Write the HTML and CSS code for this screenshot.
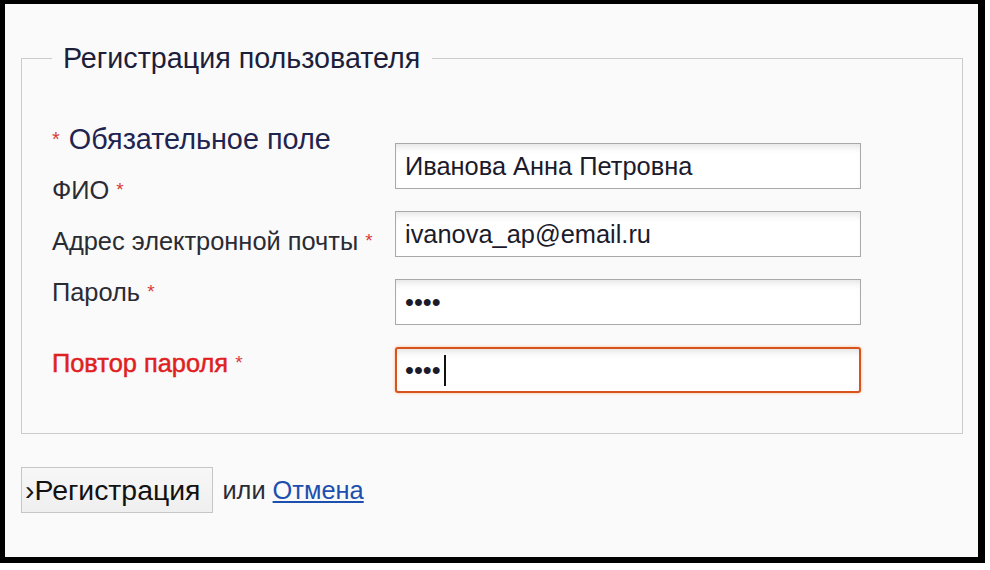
FILE: index.html
```html
<!DOCTYPE html>
<html lang="ru">
<head>
<meta charset="utf-8">
<title>Регистрация пользователя</title>
<link rel="stylesheet" href="styles.css">
</head>
<body>
<div class="frame">
  <div class="panel">
    <form class="form">
      <fieldset class="box">
        <legend class="legend">Регистрация пользователя</legend>
        <div class="cols">
          <div class="labels">
            <div class="lbl note"><span class="star">*</span> Обязательное поле</div>
            <label class="lbl" for="fio">ФИО <span class="star">*</span></label>
            <label class="lbl" for="email">Адрес электронной почты <span class="star">*</span></label>
            <label class="lbl" for="pass">Пароль <span class="star">*</span></label>
            <label class="lbl err" for="pass2">Повтор пароля <span class="star">*</span></label>
          </div>
          <div class="fields">
            <input class="inp" id="fio" type="text" value="Иванова Анна Петровна">
            <input class="inp" id="email" type="text" value="ivanova_ap@email.ru">
            <input class="inp" id="pass" type="password" value="1234">
            <div class="focus-wrap">
              <input class="inp inp-focus" id="pass2" type="password" value="1234">
              <span class="caret"></span>
            </div>
          </div>
        </div>
      </fieldset>
      <div class="actions">
        <button class="btn" type="button">›Регистрация</button>
        <span class="or">или</span>
        <a class="link" href="#">Отмена</a>
      </div>
    </form>
  </div>
</div>
</body>
</html>
```
FILE: styles.css
```css
html, body {
  margin: 0;
  padding: 0;
  background: #ffffff;
}
body {
  font-family: "Liberation Sans", Arial, sans-serif;
}
.frame {
  width: 985px;
  height: 563px;
  box-sizing: border-box;
  background: #000;
  padding: 4px 7px 6px 5px;
}
.panel {
  height: 100%;
  box-sizing: border-box;
  background: #fafafa;
  padding: 39px 15px 0 16px;
}
.box {
  margin: 0;
  min-width: 0;
  border: 1px solid #cbcbcb;
  padding: 52px 30px 40px 30px;
}
.legend {
  padding: 0 12px 0 11px;
  font-size: 28.7px;
  line-height: 30px;
  color: #1d1f3a;
}
.cols {
  display: flex;
}
.labels {
  width: 343px;
  display: flex;
  flex-direction: column;
  gap: 23px;
}
.lbl {
  display: block;
  font-size: 25.4px;
  line-height: 28px;
  color: #2b2b33;
}
.note {
  font-size: 28.8px;
  color: #1f2450;
}
.note .star {
  font-size: 20px;
  margin-right: 1px;
}
.err {
  margin-top: 20px;
  color: #e01f1f;
  -webkit-text-stroke: 0.5px #e01f1f;
}
.star {
  color: #d83a3a;
  font-size: 19px;
  vertical-align: 3px;
  -webkit-text-stroke: 0;
}
.fields {
  padding-top: 18px;
  display: flex;
  flex-direction: column;
  gap: 22px;
}
.inp {
  display: block;
  width: 466px;
  height: 46px;
  box-sizing: border-box;
  margin: 0;
  padding: 0 9px;
  border: 1px solid #a9a9a9;
  background: #fff;
  box-shadow: inset 0 7px 8px -5px rgba(0, 0, 0, 0.13);
  font-family: "Liberation Sans", Arial, sans-serif;
  font-size: 25.4px;
  color: #1b1b2b;
  outline: none;
}
.focus-wrap {
  position: relative;
  width: 466px;
}
.inp-focus {
  border: 2px solid #d9531c;
  border-radius: 3px;
  padding-left: 8px;
  box-shadow: 0 0 3px rgba(240, 130, 50, 0.55), inset 0 7px 8px -5px rgba(0, 0, 0, 0.13);
}
.caret {
  position: absolute;
  left: 49px;
  top: 8px;
  width: 2px;
  height: 31px;
  background: #111;
}
.actions {
  margin-top: 33px;
  display: flex;
  align-items: center;
}
.btn {
  height: 46px;
  margin: 0;
  padding: 0 12px 0 3px;
  border: 1px solid #c6c6c6;
  background: linear-gradient(#f7f7f7, #efefef);
  font-family: "Liberation Sans", Arial, sans-serif;
  font-size: 28.4px;
  color: #121212;
}
.or {
  margin-left: 9px;
  font-size: 25.4px;
  color: #2b2b38;
}
.link {
  margin-left: 7px;
  font-size: 25.4px;
  color: #1d4fae;
  text-decoration: underline;
}
```
